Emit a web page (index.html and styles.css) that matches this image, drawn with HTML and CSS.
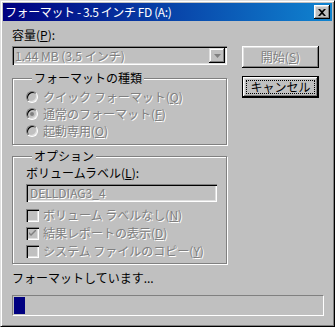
FILE: index.html
```html
<!DOCTYPE html>
<html lang="ja">
<head>
    <meta charset="UTF-8">
    <title>フォーマット - 3.5 インチ FD (A:)</title>
    <link rel="stylesheet" href="styles.css">
</head>
<body>
    <div class="window">
        <div class="titlebar">
            <span class="title">フォーマット - 3.5 インチ FD (A:)</span>
            <span class="close">
                <svg width="8" height="7" viewBox="0 0 8 7">
                    <path d="M0,0 h2 l2,2 l2,-2 h2 l-3,3.5 l3,3.5 h-2 l-2,-2 l-2,2 h-2 l3,-3.5 z" fill="#000" />
                </svg>
            </span>
        </div>

        <div class="content">
            <div class="top">
                <div class="main">
                    <div class="caption">容量(<u>P</u>):</div>
                    <div class="combo">
                        <span class="disabled">1.44 MB (3.5 インチ)</span>
                        <span class="drop">
                            <svg width="7" height="4" viewBox="0 0 7 4">
                                <path d="M0,0 h7 l-3.5,4 z" fill="#808080" />
                            </svg>
                        </span>
                    </div>

                    <div class="group group-type">
                        <div class="legend">フォーマットの種類</div>
                        <div class="option"><span class="radio"></span><span class="disabled">クイック フォーマット(<u>Q</u>)</span></div>
                        <div class="option"><span class="radio checked"></span><span class="disabled">通常のフォーマット(<u>F</u>)</span></div>
                        <div class="option"><span class="radio"></span><span class="disabled">起動専用(<u>O</u>)</span></div>
                    </div>

                    <div class="group group-options">
                        <div class="legend">オプション</div>
                        <div class="field-label">ボリュームラベル(<u>L</u>):</div>
                        <div class="textbox disabled">DELLDIAG3_4</div>
                        <div class="check-row first"><span class="checkbox"></span><span class="disabled">ボリューム ラベルなし(<u>N</u>)</span></div>
                        <div class="check-row">
                            <span class="checkbox">
                                <svg width="7" height="7" viewBox="0 0 7 7">
                                    <path d="M0,2 l2,2 l5,-5 v2 l-5,5 l-2,-2 z" fill="#808080" />
                                </svg>
                            </span>
                            <span class="disabled">結果レポートの表示(<u>D</u>)</span>
                        </div>
                        <div class="check-row"><span class="checkbox"></span><span class="disabled">システム ファイルのコピー(<u>Y</u>)</span></div>
                    </div>
                </div>

                <div class="buttons">
                    <div class="btn disabled">開始(<u>S</u>)</div>
                    <div class="btn default"><span class="focus">キャンセル</span></div>
                </div>
            </div>

            <div class="status">フォーマットしています...</div>
            <div class="progress"><div class="bar" style="width: 11px"></div></div>
        </div>
    </div>
</body>
</html>
```

FILE: styles.css
```css
* {
    box-sizing: border-box;
}
body {
    margin: 0;
    background-color: #c0c0c0;
    font-family: "Noto Sans CJK JP", "Liberation Sans", sans-serif;
    font-size: 12px;
    color: #000;
}
u {
    text-decoration: underline;
    text-underline-offset: 1px;
}
.window {
    width: 335px;
    height: 327px;
    border: 1px solid;
    border-color: #dfdfdf #000 #000 #dfdfdf;
    box-shadow: inset 1px 1px #fff, inset -1px -1px #808080;
    padding: 2px;
    display: flex;
    flex-direction: column;
}
.titlebar {
    height: 18px;
    background: linear-gradient(to right, #000080, #1084d0);
    color: #fff;
    display: flex;
    align-items: center;
    justify-content: space-between;
    padding: 0 2px 0 2px;
}
.title {
    line-height: 18px;
    white-space: nowrap;
    letter-spacing: -0.4px;
}
.close {
    width: 16px;
    height: 14px;
    background: #c0c0c0;
    box-shadow: inset -1px -1px #000, inset 1px 1px #fff, inset -2px -2px #808080, inset 2px 2px #dfdfdf;
    display: flex;
    align-items: center;
    justify-content: center;
}
.content {
    flex: 1;
    padding: 0 8px 0 9px;
    display: flex;
    flex-direction: column;
}
.top {
    display: flex;
    gap: 15px;
}
.main {
    width: 215px;
}
.disabled {
    color: #808080;
    text-shadow: 1px 1px 0 #fff;
}
.caption {
    margin-top: 7px;
    line-height: 14px;
}
.combo {
    margin-top: 4px;
    height: 19px;
    display: flex;
    align-items: center;
    justify-content: space-between;
    padding: 2px 2px 2px 3px;
    box-shadow: inset 1px 1px #808080, inset 2px 2px #000, inset -1px -1px #fff, inset -2px -2px #dfdfdf;
    line-height: 14px;
    white-space: nowrap;
}
.drop {
    width: 16px;
    height: 15px;
    background: #c0c0c0;
    box-shadow: inset -1px -1px #000, inset 1px 1px #dfdfdf, inset -2px -2px #808080, inset 2px 2px #fff;
    display: flex;
    align-items: center;
    justify-content: center;
}
.group {
    border: 1px solid #808080;
    box-shadow: inset 1px 1px #fff, 1px 1px #fff;
    padding-left: 13px;
}
.legend {
    margin: -8px 0 0 6px;
    padding: 0 2px;
    width: max-content;
    background: #c0c0c0;
    line-height: 14px;
}
.group-type {
    margin-top: 13px;
    height: 67px;
}
.option {
    display: flex;
    align-items: center;
    gap: 5px;
    height: 17px;
    line-height: 14px;
    white-space: nowrap;
}
.group-type .legend {
    margin-bottom: 3px;
}
.radio {
    width: 12px;
    height: 12px;
    border-radius: 50%;
    border: 1px solid;
    border-color: #808080 #fff #fff #808080;
    box-shadow: inset 1px 1px #000, inset -1px -1px #dfdfdf;
    background: #c0c0c0;
    display: flex;
    align-items: center;
    justify-content: center;
}
.radio.checked::after {
    content: "";
    width: 4px;
    height: 4px;
    border-radius: 50%;
    background: #808080;
}
.group-options {
    margin-top: 11px;
    height: 108px;
}
.field-label {
    margin-top: 3px;
    line-height: 14px;
}
.textbox {
    margin-top: 4px;
    width: 191px;
    height: 18px;
    padding: 1px 4px;
    line-height: 16px;
    box-shadow: inset 1px 1px #808080, inset 2px 2px #000, inset -1px -1px #fff, inset -2px -2px #dfdfdf;
}
.check-row {
    display: flex;
    align-items: center;
    gap: 4px;
    height: 18px;
    line-height: 14px;
    white-space: nowrap;
}
.check-row.first {
    margin-top: 4px;
}
.checkbox {
    width: 13px;
    height: 13px;
    background: #c0c0c0;
    box-shadow: inset 1px 1px #808080, inset 2px 2px #000, inset -1px -1px #fff, inset -2px -2px #dfdfdf;
    display: flex;
    align-items: center;
    justify-content: center;
}
.buttons {
    margin-top: 25px;
    display: flex;
    flex-direction: column;
    gap: 8px;
}
.btn {
    width: 77px;
    height: 22px;
    display: flex;
    align-items: center;
    justify-content: center;
    line-height: 14px;
    box-shadow: inset -1px -1px #000, inset 1px 1px #fff, inset -2px -2px #808080, inset 2px 2px #dfdfdf;
}
.btn.default {
    border: 1px solid #000;
    padding: 3px;
}
.focus {
    flex: 1;
    align-self: stretch;
    display: flex;
    align-items: center;
    justify-content: center;
    border: 1px dotted #000;
}
.status {
    margin-top: 7px;
    line-height: 14px;
}
.progress {
    margin-top: 10px;
    height: 21px;
    width: 312px;
    border: 1px solid;
    border-color: #808080 #fff #fff #808080;
    padding: 1px;
}
.bar {
    height: 100%;
    background: #000080;
}
```
